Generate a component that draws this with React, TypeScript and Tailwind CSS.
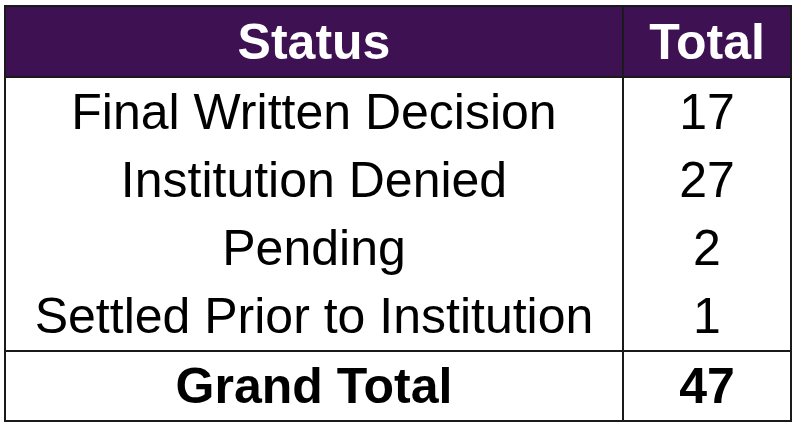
const rows = [
  { status: "Final Written Decision", total: 17 },
  { status: "Institution Denied", total: 27 },
  { status: "Pending", total: 2 },
  { status: "Settled Prior to Institution", total: 1 },
];

export default function App() {
  return (
    <div className="w-[800px] h-[430px] bg-white pl-[4px] pt-[5px] font-['Liberation_Sans',Arial,sans-serif]">
      <div className="w-[788px] border-2 border-[#1a1a1a] text-[50px] leading-none text-black">
        {/* header */}
        <div className="grid grid-cols-[616px_1fr] h-[71px] bg-[#3d1152] border-b-2 border-[#1a1a1a] font-bold text-white">
          <div className="flex items-center justify-center">Status</div>
          <div className="flex items-center justify-center border-l-2 border-[#1a1a1a]">Total</div>
        </div>

        {rows.map((r) => (
          <div key={r.status} className="grid grid-cols-[616px_1fr] h-[68px]">
            <div className="flex items-center justify-center whitespace-nowrap">{r.status}</div>
            <div className="flex items-center justify-center border-l-2 border-[#1a1a1a]">{r.total}</div>
          </div>
        ))}

        {/* grand total */}
        <div className="grid grid-cols-[616px_1fr] h-[70px] border-t-2 border-[#1a1a1a] font-bold">
          <div className="flex items-center justify-center">Grand Total</div>
          <div className="flex items-center justify-center border-l-2 border-[#1a1a1a]">47</div>
        </div>
      </div>
    </div>
  );
}
